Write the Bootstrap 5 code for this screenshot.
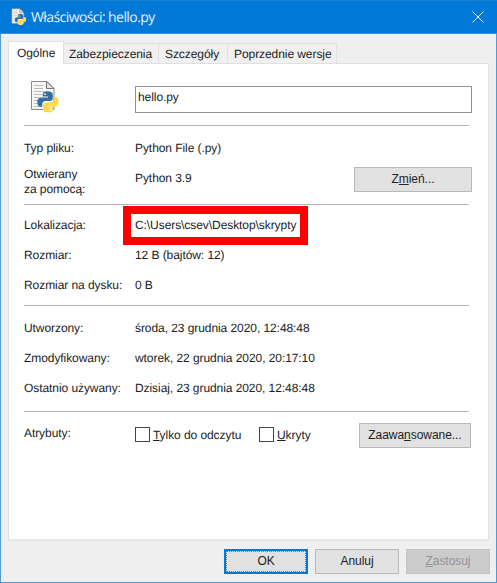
<!DOCTYPE html>
<html lang="pl">
<head>
<meta charset="utf-8">
<meta name="viewport" content="width=device-width, initial-scale=1">
<title>Właściwości: hello.py</title>
<link href="https://cdn.jsdelivr.net/npm/bootstrap@5.3.0/dist/css/bootstrap.min.css" rel="stylesheet">
<style>
body{font:12px/15px "Liberation Sans",Arial,sans-serif;letter-spacing:-.07px;text-rendering:geometricPrecision;color:#222;background:#efefef;overflow:hidden}
.win{width:497px;height:583px;border:1px solid #4a9ce0;background:#efefef}
.titlebar{height:34px;flex:none;margin:-1px -1px 0;padding:0 13px 0 11px;background:#0078d7;border-bottom:1px solid #3a93dd;border-top:1px solid #1c80cf;color:#e4f0fb;font:14px/20px "Open Sans","Noto Sans",sans-serif;letter-spacing:-.58px}
.titlebar span{padding-top:2px}
.tabs{height:29px;flex:none;padding:6px 0 0 7px}
.tabs .nav-link{height:20px;padding:3px 0 0 5px;color:#222;background:#f0f0f0;border:1px solid #e0e0e0;border-left-width:0;border-bottom:0;border-radius:0;line-height:15px;white-space:nowrap}
.tabs .nav-link.active{height:23px;margin-bottom:-1px;padding:4px 0 0 8px;background:#fff;border-left-width:1px;position:relative;color:#222}
.t1{width:56px}.t2{width:95px}.t3{width:69px}.t4{width:109px}
.tabs .t3,.tabs .t4{padding-left:6px}
.panel{width:481px;height:478px;flex:none;margin-left:7px;padding:16px 18px 0 15px;background:#fff;border:1px solid #e0e0e0;border-bottom:2px solid #e5e5e5}
.rule{height:1px;background:#b5b5b5;margin-right:1px}
.r1{margin-top:11px}
.lab{width:111px;flex:none}
.line{height:30px}
.r1+.line{padding-top:15px;height:41px}
.line.open{height:37px}
.open .val{padding-top:4px}
.line.loc{padding-top:13px;height:43px}
.line.disk{height:27px}
.line.dates{padding-top:15px;height:45px}
.field{width:337px;flex:none;height:27px;border:1px solid #919191;padding:3px 0 0 2px;border-radius:0}
.icon-row{height:34px;padding-top:6px}
.icon-row svg{margin:-6px 0 0 6px}
.wbtn{height:25px;padding:0;border:1px solid #b9b9b9;border-radius:0;background:#e1e1e1;color:#222;font-size:12px;line-height:23px;letter-spacing:-.05px}
.wbtn.main{border:2px solid #0078d7;line-height:19px;padding:0}
.wbtn.main span{display:block;height:21px;border:1px dotted #6b7f92}
.wbtn:disabled{background:#ccc;border-color:#c3c3c3;color:#939393;opacity:1}
.w-change{width:118px;margin-right:-2px}
.w-adv{width:112px;margin-right:-1px}
.red-frame{border:8px solid #f00;margin:-12px 0 0 -12px;width:185px;height:39px;padding:4px 0 0 4px}
.form-check-input.tick{width:15px;height:15px;border:1px solid #444;border-radius:0;margin:0;flex:none}
.attrs{padding-top:11px}
.lab-attr{padding-top:3px}
.attrs label{padding-top:4px}
.attrs label span{padding:1px 0 0 3px}
.opt-read{width:124px}
.foot{gap:7px;padding:8px 6px 0 0}
.foot .wbtn{width:84px}
u{text-underline-offset:1px}
</style>
</head>
<body>
<svg width="0" height="0" class="position-absolute">
  <symbol id="pyfile" viewBox="0 0 30 34">
    <path d="M1.500 1.500H17L24 8.500V29.500H1.500Z" fill="#f7f7f7" stroke="#888"/>
    <path d="M16.500 1.500V8.500H24Z" fill="#e2e2e2" stroke="#777"/>
    <path d="M4 5.500H13M4 8.500H13M4 11.500H20M4 14.500H12M4 17.500H9M4 20.500H8M4 23.500H8M4 26.500H11" stroke="#bbb"/>
    <path d="M17.500 11.500C14 11.500 12.700 12.500 12.700 14.500V16.500H18V17.500H11C8.300 17.500 7.300 19.600 7.300 22.300S8.400 26.800 10.300 26.800H12.200V24.300C12.200 22.300 13.500 21 15.500 21H20C21.800 21 22.800 19.800 22.800 18.200V14.500C22.800 12.500 21 11.500 17.500 11.500Z" fill="#326e9f"/>
    <circle cx="15" cy="14.200" r=".9" fill="#fff"/>
    <path d="M24 17V19.300C24 21.200 22.500 22.400 20.700 22.400H16C14.200 22.400 13 23.600 13 25.300V29.300C13 31.500 15 32.500 18.200 32.500S23.200 31.500 23.200 29.300V27.300H18V26.400H25.300C27.700 26.400 28.600 24.500 28.600 21.700S27.500 17 25.500 17Z" fill="#ffda4b"/>
    <circle cx="20.800" cy="29.700" r=".9" fill="#fff"/>
  </symbol>
</svg>
<div class="win d-flex flex-column">
  <header class="titlebar d-flex align-items-center">
    <svg width="16" height="18" class="me-1"><use href="#pyfile"/></svg>
    <span class="flex-grow-1">Właściwości: hello.py</span>
    <svg width="12" height="12" viewBox="0 0 12 12"><path d="M.5.500 11.500 11.500M11.500.500.5 11.500" stroke="#e5f2fd" fill="none"/></svg>
  </header>
  <nav class="tabs nav flex-nowrap align-items-end">
    <a class="nav-link active t1">Ogólne</a>
    <a class="nav-link t2">Zabezpieczenia</a>
    <a class="nav-link t3">Szczegóły</a>
    <a class="nav-link t4">Poprzednie wersje</a>
  </nav>
  <main class="panel">
    <div class="d-flex icon-row">
      <div class="lab"><svg class="d-block" width="30" height="34"><use href="#pyfile"/></svg></div>
      <div class="field">hello.py</div>
    </div>
    <div class="rule r1"></div>
    <div class="d-flex line"><span class="lab">Typ pliku:</span><span>Python File (.py)</span></div>
    <div class="d-flex line open"><span class="lab">Otwierany<br>za pomocą:</span><span class="val flex-grow-1">Python 3.9</span><button class="btn wbtn w-change">Z<u>m</u>ień...</button></div>
    <div class="rule"></div>
    <div class="d-flex line loc"><span class="lab">Lokalizacja:</span><span class="red-frame">C:\Users\csev\Desktop\skrypty</span></div>
    <div class="d-flex line"><span class="lab">Rozmiar:</span><span>12 B (bajtów: 12)</span></div>
    <div class="d-flex line disk"><span class="lab">Rozmiar na dysku:</span><span>0 B</span></div>
    <div class="rule"></div>
    <div class="d-flex line dates"><span class="lab">Utworzony:</span><span>środa, 23 grudnia 2020, 12:48:48</span></div>
    <div class="d-flex line"><span class="lab">Zmodyfikowany:</span><span>wtorek, 22 grudnia 2020, 20:17:10</span></div>
    <div class="d-flex line"><span class="lab">Ostatnio używany:</span><span>Dzisiaj, 23 grudnia 2020, 12:48:48</span></div>
    <div class="rule"></div>
    <div class="d-flex attrs">
      <span class="lab lab-attr">Atrybuty:</span>
      <label class="d-flex opt-read"><input type="checkbox" class="form-check-input tick"><span><u>T</u>ylko do odczytu</span></label>
      <label class="d-flex flex-grow-1"><input type="checkbox" class="form-check-input tick"><span><u>U</u>kryty</span></label>
      <button class="btn wbtn w-adv">Zaawa<u>n</u>sowane...</button>
    </div>
  </main>
  <footer class="d-flex justify-content-end foot">
    <button class="btn wbtn main"><span>OK</span></button>
    <button class="btn wbtn">Anuluj</button>
    <button class="btn wbtn" disabled><u>Z</u>astosuj</button>
  </footer>
</div>
<script src="https://cdn.jsdelivr.net/npm/bootstrap@5.3.0/dist/js/bootstrap.bundle.min.js"></script>
</body>
</html>
